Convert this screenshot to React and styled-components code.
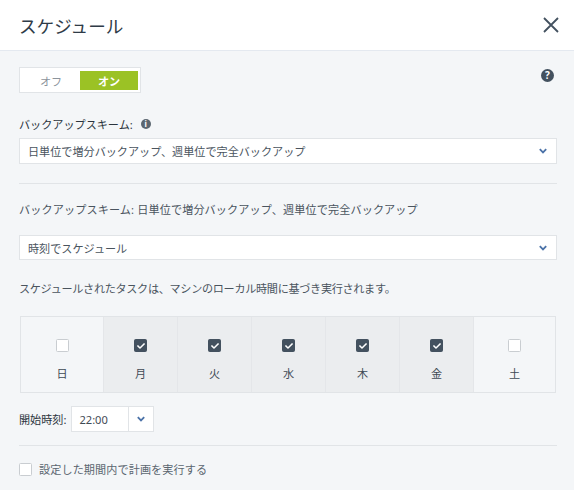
import React from 'react';
import styled, { createGlobalStyle } from 'styled-components';
import { FaCheck } from 'react-icons/fa';

const GlobalStyle = createGlobalStyle`
  html, body {
    margin: 0;
    padding: 0;
    background: #f4f6f8;
  }
  body {
    font-family: "Noto Sans", "Noto Sans CJK JP", sans-serif;
    font-size: 11.12px;
    color: #3f4a55;
  }
`;

const Dialog = styled.div`
  width: 574px;
  height: 490px;
  overflow: hidden;
  background: #f4f6f8;
`;

const Header = styled.header`
  height: 50px;
  box-sizing: border-box;
  padding: 0 15px 0 19px;
  display: flex;
  align-items: center;
  justify-content: space-between;
  background: #fff;
`;

const Title = styled.h1`
  margin: 0;
  font-size: 17.6px;
  font-weight: 400;
  color: #2f3b47;
`;

const CloseButton = styled.svg`
  width: 16px;
  height: 16px;
  stroke: #43515f;
  stroke-width: 1.8;
  fill: none;
`;

const Body = styled.main`
  border-top: 1px solid #e4e9f0;
  padding: 16px 17px 0 19px;
`;

const TopRow = styled.div`
  display: flex;
  justify-content: space-between;
  align-items: flex-start;
`;

const Toggle = styled.div`
  width: 122px;
  height: 26px;
  box-sizing: border-box;
  border: 1px solid #e1e4e7;
  background: #fff;
  padding: 3px 2px 2px 2px;
  display: flex;
`;

const ToggleOption = styled.span`
  flex: ${p => (p.$on ? '0 0 58px' : '1')};
  display: flex;
  align-items: center;
  justify-content: center;
  background: ${p => (p.$on ? '#9bc225' : 'transparent')};
  color: ${p => (p.$on ? '#fff' : '#8c949c')};
  font-weight: ${p => (p.$on ? 700 : 400)};
`;

const HelpIcon = styled.span`
  width: 13px;
  height: 13px;
  margin: 2px 3px 0 0;
  border-radius: 50%;
  background: #43515f;
  color: #fff;
  font-size: 10px;
  font-weight: 700;
  line-height: 13px;
  text-align: center;
`;

const Label = styled.div`
  margin-top: 21px;
  height: 19px;
  display: flex;
  align-items: center;
  gap: 8px;
  color: #2b343d;
`;

const InfoIcon = styled.span`
  width: 10px;
  height: 10px;
  border-radius: 50%;
  background: #5b6670;
  color: #fff;
  font-size: 8px;
  font-weight: 700;
  line-height: 10px;
  text-align: center;
`;

const Select = styled.div`
  height: ${p => p.$height}px;
  margin-top: ${p => p.$top}px;
  box-sizing: border-box;
  border: 1px solid #e1e4e7;
  background: #fff;
  padding: 0 9px 0 8px;
  display: flex;
  align-items: center;
  justify-content: space-between;
  color: #4a545e;
`;

const Chevron = styled.svg`
  width: 8px;
  height: 6px;
  fill: none;
  stroke: #4b72a8;
  stroke-width: 1.8;
`;

const Divider = styled.hr`
  margin: ${p => p.$top}px 0 0;
  border: 0;
  border-top: 1px solid #e1e4e7;
`;

const Text = styled.p`
  margin: ${p => p.$top}px 0 0;
  line-height: 16px;
  letter-spacing: ${p => p.$spacing}px;
  color: #4a545e;
`;

const Days = styled.div`
  margin-top: 19px;
  margin-left: 1px;
  width: 536px;
  height: 77px;
  box-sizing: border-box;
  border: 1px solid #e1e4e7;
  display: grid;
  grid-template-columns: 82px repeat(5, 74px) 1fr;
`;

const Day = styled.div`
  display: flex;
  flex-direction: column;
  align-items: center;
  padding-top: 22px;
  gap: 13px;
  box-sizing: border-box;
  border-left: ${p => (p.$first ? '0' : '1px solid #e4e6e9')};
  background: ${p => (p.$checked ? '#ebedef' : 'transparent')};
  color: #3f4a55;
`;

const Check = styled.span`
  width: 13px;
  height: 13px;
  box-sizing: border-box;
  border-radius: 1.5px;
  flex: none;
  display: flex;
  align-items: center;
  justify-content: center;
  color: #fff;
  font-size: 8px;
  background: ${p => (p.$checked ? '#43515f' : '#fff')};
  border: 1px solid ${p => (p.$checked ? '#43515f' : '#c9cdd1')};
`;

const TimeRow = styled.div`
  margin-top: 13px;
  display: flex;
  align-items: center;
  gap: 5px;
  color: #2b343d;
`;

const TimeSelect = styled.div`
  width: 83px;
  height: 26px;
  box-sizing: border-box;
  border: 1px solid #e1e4e7;
  background: #fff;
  display: flex;
  align-items: center;
`;

const TimeValue = styled.span`
  flex: 1;
  padding-left: 7px;
  color: #3f4a55;
`;

const TimeArrow = styled.span`
  width: 24px;
  height: 100%;
  border-left: 1px solid #e1e4e7;
  display: flex;
  align-items: center;
  justify-content: center;
`;

const PeriodRow = styled.label`
  margin-top: 15px;
  display: flex;
  align-items: center;
  gap: 7px;
  letter-spacing: 0.1px;
  color: #5b6670;
`;

const days = [
  ['日', false],
  ['月', true],
  ['火', true],
  ['水', true],
  ['木', true],
  ['金', true],
  ['土', false],
];

const Arrow = () => (
  <Chevron viewBox="0 0 8 6">
    <path d="M0.8 1.2 L4 4.4 L7.2 1.2" />
  </Chevron>
);

export default function App() {
  return (
    <Dialog>
      <GlobalStyle />
      <Header>
        <Title>スケジュール</Title>
        <CloseButton viewBox="0 0 16 16">
          <path d="M1 1 L15 15 M15 1 L1 15" />
        </CloseButton>
      </Header>
      <Body>
        <TopRow>
          <Toggle>
            <ToggleOption>オフ</ToggleOption>
            <ToggleOption $on>オン</ToggleOption>
          </Toggle>
          <HelpIcon>?</HelpIcon>
        </TopRow>
        <Label>
          バックアップスキーム:
          <InfoIcon>i</InfoIcon>
        </Label>
        <Select $height={26} $top={5}>
          日単位で増分バックアップ、週単位で完全バックアップ
          <Arrow />
        </Select>
        <Divider $top={19} />
        <Text $top={18} $spacing={0.13}>バックアップスキーム: 日単位で増分バックアップ、週単位で完全バックアップ</Text>
        <Select $height={25} $top={17}>
          時刻でスケジュール
          <Arrow />
        </Select>
        <Text $top={21} $spacing={-0.3}>スケジュールされたタスクは、マシンのローカル時間に基づき実行されます。</Text>
        <Days>
          {days.map(([name, checked], i) => (
            <Day key={name} $checked={checked} $first={i === 0}>
              <Check $checked={checked}>{checked && <FaCheck />}</Check>
              {name}
            </Day>
          ))}
        </Days>
        <TimeRow>
          開始時刻:
          <TimeSelect>
            <TimeValue>22:00</TimeValue>
            <TimeArrow><Arrow /></TimeArrow>
          </TimeSelect>
        </TimeRow>
        <Divider $top={13} />
        <PeriodRow>
          <Check />
          設定した期間内で計画を実行する
        </PeriodRow>
      </Body>
    </Dialog>
  );
}
